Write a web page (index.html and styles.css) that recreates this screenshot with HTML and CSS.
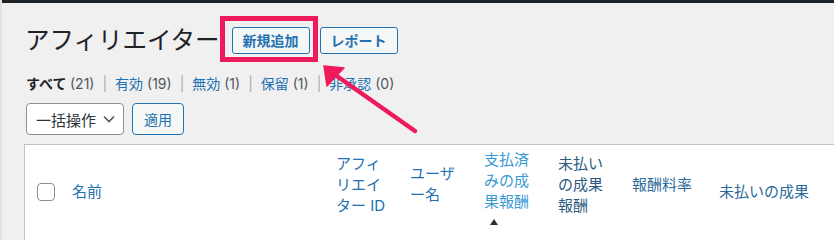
FILE: index.html
```html
<!DOCTYPE html>
<html lang="ja">
<head>
<meta charset="utf-8">
<title>アフィリエイター</title>
<link rel="stylesheet" href="styles.css">
</head>
<body>
<div class="adminbar"></div>
<div class="wrap">
  <div class="title-row">
    <h1 class="page-title">アフィリエイター</h1>
    <a class="title-action" href="#">新規追加</a>
    <a class="title-action" href="#">レポート</a>
  </div>
  <ul class="subsubsub">
    <li><a class="current" href="#">すべて <span class="count">(21)</span></a><span class="sep">|</span></li>
    <li><a href="#">有効</a> <span class="count">(19)</span><span class="sep">|</span></li>
    <li><a href="#">無効</a> <span class="count">(1)</span><span class="sep">|</span></li>
    <li><a href="#">保留</a> <span class="count">(1)</span><span class="sep">|</span></li>
    <li><a href="#">非承認</a> <span class="count">(0)</span></li>
  </ul>
  <div class="tablenav">
    <div class="select">
      <span>一括操作</span>
      <svg class="chev" width="12" height="8" viewBox="0 0 12 8"><path d="M1 1.5 L6 6.5 L11 1.5" fill="none" stroke="#50575e" stroke-width="1.6"/></svg>
    </div>
    <button class="btn" type="button">適用</button>
  </div>
  <table class="list">
    <colgroup>
      <col class="c-cb"><col class="c-name"><col class="c-n"><col class="c-n"><col class="c-n"><col class="c-n"><col class="c-rate"><col>
    </colgroup>
    <thead>
      <tr>
        <th class="cb"><span class="checkbox"></span></th>
        <th class="col-name">名前</th>
        <th class="col-id"><div>アフィ<br>リエイ<br>ター ID</div><div class="ind"></div></th>
        <th class="col-user"><div>ユーザ<br>ー名</div><div class="ind"></div></th>
        <th class="col-paid"><div>支払済<br>みの成<br>果報酬</div><div class="ind"><span class="sort-up"></span></div></th>
        <th class="col-unpaid"><div>未払い<br>の成果<br>報酬</div><div class="ind"></div></th>
        <th class="col-rate"><div>報酬料率</div><div class="ind"></div></th>
        <th class="col-last">未払いの成果</th>
      </tr>
    </thead>
    <tbody>
      <tr class="row"><td colspan="8"></td></tr>
    </tbody>
  </table>
</div>
<div class="highlight"></div>
<svg class="arrow" width="834" height="236" viewBox="0 0 834 236">
  <line x1="415" y1="131" x2="334" y2="74" stroke="#ef1a5c" stroke-width="4.5" stroke-linecap="round"/>
  <polygon points="324,66 344,68 336,76 327,86" fill="#ef1a5c" stroke="#ef1a5c" stroke-width="1.5" stroke-linejoin="round"/>
</svg>
</body>
</html>
```
FILE: styles.css
```css
html, body {
  margin: 0;
  height: 100%;
  overflow: hidden;
}
body {
  position: relative;
  background: #f0f0f1;
  border-left: 2px solid #e2e2e3;
  font-family: Inter, "Noto Sans CJK JP", sans-serif;
  color: #3c434a;
}
.adminbar {
  height: 3px;
  background: #1d2327;
}
.wrap {
  padding-left: 22px;
}
.title-row {
  display: flex;
  align-items: center;
  height: 34px;
  margin-top: 20px;
}
.page-title {
  margin: 0 12px 0 1px;
  font-size: 24.5px;
  font-weight: 400;
  line-height: 34px;
  color: #1d2327;
}
.title-action {
  box-sizing: border-box;
  height: 27px;
  display: inline-flex;
  align-items: center;
  padding: 0 10px;
  margin-right: 10px;
  border: 1px solid #2271b1;
  border-radius: 3px;
  background: #f6f7f7;
  color: #2271b1;
  font-size: 14px;
  font-weight: 600;
  text-decoration: none;
}
.subsubsub {
  list-style: none;
  display: flex;
  margin: 16px 0 0;
  padding: 0 0 0 2px;
  font-size: 14px;
  line-height: 21px;
  color: #50575e;
}
.subsubsub a {
  color: #2271b1;
  text-decoration: none;
}
.subsubsub a.current {
  color: #1d2327;
  font-weight: 600;
}
.subsubsub .count {
  font-weight: 400;
  color: #50575e;
}
.sep {
  color: #a7aaad;
  margin: 0 8px;
}
.tablenav {
  display: flex;
  gap: 8px;
  margin-top: 9px;
  padding-left: 2px;
}
.select {
  box-sizing: border-box;
  width: 98px;
  height: 32px;
  display: flex;
  align-items: center;
  justify-content: space-between;
  padding: 0 8px 0 9px;
  border: 1px solid #8c8f94;
  border-radius: 4px;
  background: #fff;
  font-size: 15px;
  color: #2c3338;
}
.btn {
  box-sizing: border-box;
  height: 32px;
  padding: 0 11px;
  border: 1px solid #2271b1;
  border-radius: 4px;
  background: #f6f7f7;
  color: #2271b1;
  font-family: inherit;
  font-size: 14px;
}
.list {
  margin-top: 9px;
  width: 830px;
  table-layout: fixed;
  border-collapse: separate;
  border-spacing: 0;
  border: 1px solid #c3c4c7;
  background: #fff;
}
.c-cb { width: 37px; }
.c-name { width: 264px; }
.c-n { width: 74px; }
.c-rate { width: 87px; }
.list thead tr {
  height: 92px;
}
.list .row {
  height: 40px;
}
.list th {
  padding: 0 10px;
  vertical-align: middle;
  text-align: left;
  font-weight: 400;
  font-size: 15px;
  line-height: 21px;
  color: #2271b1;
  white-space: nowrap;
}
.list th.cb {
  padding: 0 0 0 12px;
}
.checkbox {
  display: block;
  box-sizing: border-box;
  width: 18px;
  height: 18px;
  margin-top: 2px;
  border: 1px solid #8c8f94;
  border-radius: 4px;
  background: #fff;
}
.ind {
  height: 14px;
}
.sort-up {
  display: block;
  width: 0;
  height: 0;
  margin: 7px 0 0 6px;
  border-left: 4px solid transparent;
  border-right: 4px solid transparent;
  border-bottom: 6px solid #2c3338;
}
.col-name { color: #2b78b3; }
.col-id { color: #3383be; }
.col-user { color: #3080bb; }
.list th.col-paid { color: #3a9ad6; }
.list th.col-unpaid { color: #2c5a80; }
.list th.col-rate { color: #2c6a99; }
.list th.col-last { color: #2a6a9c; }
.highlight {
  position: absolute;
  left: 218px;
  top: 16px;
  width: 98px;
  height: 46px;
  box-sizing: border-box;
  border: 5px solid #ef1a5c;
}
.arrow {
  position: absolute;
  left: -2px;
  top: 0;
  pointer-events: none;
}
```
